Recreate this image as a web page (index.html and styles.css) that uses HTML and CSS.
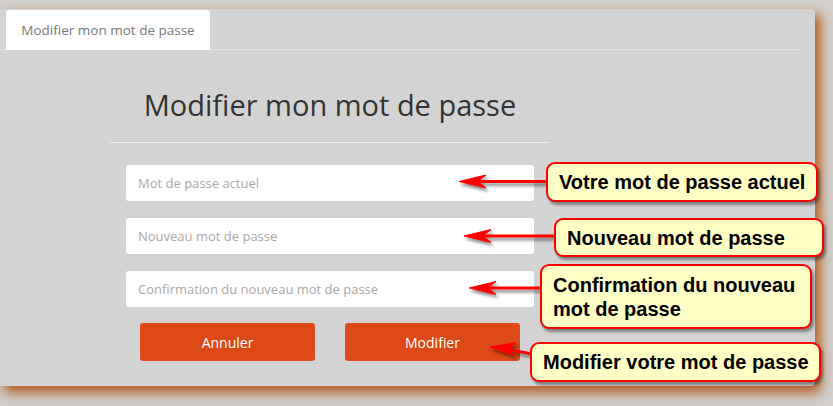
FILE: index.html
```html
<!DOCTYPE html>
<html lang="fr">
<head>
<meta charset="utf-8">
<title>Modifier mon mot de passe</title>
<link rel="stylesheet" href="styles.css">
</head>
<body>
<div class="page">
  <div class="panel">
    <div class="tabs">
      <div class="tab">Modifier mon mot de passe</div>
    </div>
    <div class="form">
      <h1 class="title">Modifier mon mot de passe</h1>
      <div class="fields">
        <div class="field">Mot de passe actuel</div>
        <div class="field">Nouveau mot de passe</div>
        <div class="field">Confirmation du nouveau mot de passe</div>
      </div>
      <div class="actions">
        <div class="btn">Annuler</div>
        <div class="btn">Modifier</div>
      </div>
    </div>
  </div>

  <svg class="arrows" width="833" height="406" viewBox="0 0 833 406">
    <defs>
      <filter id="sh" x="-20%" y="-50%" width="140%" height="250%">
        <feDropShadow dx="2" dy="3" stdDeviation="1.5" flood-color="#000" flood-opacity="0.45"/>
      </filter>
    </defs>
    <g fill="#f00" stroke="#f00" filter="url(#sh)">
      <line x1="478" y1="181.5" x2="548" y2="181.5" stroke-width="3"/>
      <polygon points="459,181.5 486,175 478,181.5 486,188" stroke-width="1"/>
      <line x1="483" y1="236" x2="556" y2="236" stroke-width="3"/>
      <polygon points="464,236 491,229.5 483,236 491,242.5" stroke-width="1"/>
      <line x1="488" y1="288" x2="542" y2="288" stroke-width="3"/>
      <polygon points="469,288 496,281.5 488,288 496,294.5" stroke-width="1"/>
      <line x1="508" y1="349.5" x2="532" y2="354" stroke-width="3"/>
      <polygon points="490,347 516,342.5 508,349.5 514,355.5" stroke-width="1"/>
    </g>
  </svg>

  <div class="note note-1">Votre mot de passe actuel</div>
  <div class="note note-2">Nouveau mot de passe</div>
  <div class="note note-3">Confirmation du nouveau<br>mot de passe</div>
  <div class="note note-4">Modifier votre mot de passe</div>
</div>
</body>
</html>
```

FILE: styles.css
```css
html, body {
  margin: 0;
  padding: 0;
}
body {
  background: #d2cfcc;
  width: 833px;
  height: 406px;
  overflow: hidden;
}
.page {
  position: relative;
  width: 833px;
  height: 406px;
  padding-top: 9px;
  box-sizing: border-box;
  font-family: "Open Sans", "DejaVu Sans", sans-serif;
}
.panel {
  width: 815px;
  height: 377px;
  background: #d3d3d3;
  border-radius: 0 4px 4px 0;
  box-shadow: 5px 6px 12px 1px rgba(178, 92, 30, 0.95);
  display: flex;
  flex-direction: column;
}
.tabs {
  width: 800px;
  height: 41px;
  border-bottom: 1px solid #e2e2e2;
  box-sizing: border-box;
  padding-left: 6px;
  padding-top: 1px;
  display: flex;
}
.tab {
  width: 204px;
  height: 40px;
  background: #fff;
  border-radius: 3px 3px 0 0;
  color: #7a7a7a;
  font-size: 13.5px;
  display: flex;
  align-items: center;
  justify-content: center;
}
.form {
  width: 440px;
  margin-left: 110px;
  display: flex;
  flex-direction: column;
}
.title {
  margin: 35px 0 0;
  padding-bottom: 17px;
  border-bottom: 1px solid #ececec;
  font-weight: 400;
  font-size: 29px;
  line-height: 40px;
  color: #333;
  text-align: center;
}
.fields {
  margin-top: 22px;
  padding: 0 16px;
  display: flex;
  flex-direction: column;
  gap: 17px;
}
.field {
  height: 36px;
  background: #fff;
  border-radius: 3px;
  padding-left: 12px;
  display: flex;
  align-items: center;
  color: #ada8a3;
  font-size: 13px;
}
.actions {
  margin-top: 16px;
  padding: 0 30px;
  display: flex;
  gap: 30px;
}
.btn {
  width: 175px;
  height: 38px;
  background: #dd4a17;
  border-radius: 3px;
  color: #fff;
  font-size: 14px;
  display: flex;
  align-items: center;
  justify-content: center;
}
.arrows {
  position: absolute;
  left: 0;
  top: 0;
}
.note {
  position: absolute;
  box-sizing: border-box;
  background: #ffffc6;
  border: 2px solid #f00;
  border-radius: 9px;
  box-shadow: 2px 3px 3px rgba(0, 0, 0, 0.4);
  font-family: "Liberation Sans", Arial, sans-serif;
  font-weight: 700;
  font-size: 20px;
  color: #000;
  display: flex;
  align-items: center;
  padding-left: 11px;
  line-height: 24px;
}
.note-1 { left: 546px; top: 162px; width: 272px; height: 40px; }
.note-2 { left: 554px; top: 218px; width: 270px; height: 39px; }
.note-3 { left: 540px; top: 264px; width: 272px; height: 65px; }
.note-4 { left: 530px; top: 342px; width: 291px; height: 40px; }
```
